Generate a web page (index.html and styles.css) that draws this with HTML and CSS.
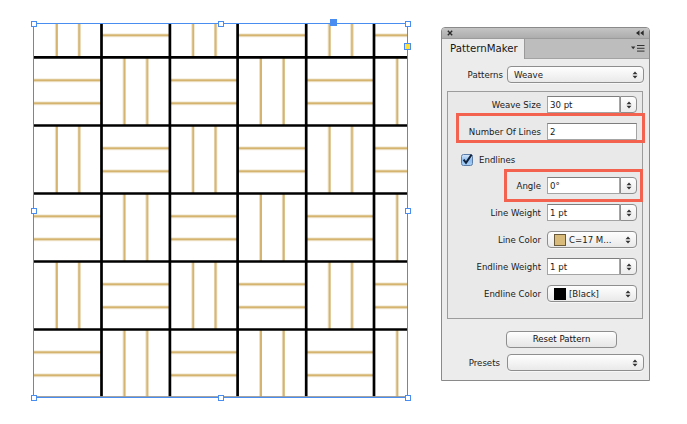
FILE: index.html
```html
<!DOCTYPE html>
<html>
<head>
<meta charset="utf-8">
<link rel="stylesheet" href="styles.css">
</head>
<body>
<div class="stage">
  <div class="artboard">
    <svg class="weave" viewBox="0 0 376 376" width="376" height="376">
      <defs>
        <pattern id="wv" patternUnits="userSpaceOnUse" x="0" y="-33.7" width="136.4" height="136">
          <g stroke="#d4b46f" stroke-width="2.4">
            <line x1="23.7" y1="0" x2="23.7" y2="68"/>
            <line x1="46.2" y1="0" x2="46.2" y2="68"/>
            <line x1="68.2" y1="23" x2="136.4" y2="23"/>
            <line x1="68.2" y1="46" x2="136.4" y2="46"/>
            <line x1="0" y1="91" x2="68.2" y2="91"/>
            <line x1="0" y1="114" x2="68.2" y2="114"/>
            <line x1="91.4" y1="68" x2="91.4" y2="136"/>
            <line x1="114.2" y1="68" x2="114.2" y2="136"/>
          </g>
        </pattern>
      </defs>
      <rect x="0.5" y="0.5" width="374" height="374" fill="url(#wv)"/>
      <g stroke="#000" stroke-width="2.7">
        <line x1="68.5" y1="0.5" x2="68.5" y2="374.5"/>
        <line x1="136.9" y1="0.5" x2="136.9" y2="374.5"/>
        <line x1="204.6" y1="0.5" x2="204.6" y2="374.5"/>
        <line x1="273.2" y1="0.5" x2="273.2" y2="374.5"/>
        <line x1="341" y1="0.5" x2="341" y2="374.5"/>
        <line x1="0.5" y1="34.3" x2="374.5" y2="34.3"/>
        <line x1="0.5" y1="102.5" x2="374.5" y2="102.5"/>
        <line x1="0.5" y1="170.5" x2="374.5" y2="170.5"/>
        <line x1="0.5" y1="238.5" x2="374.5" y2="238.5"/>
        <line x1="0.5" y1="306.5" x2="374.5" y2="306.5"/>
      </g>
      <line x1="0.5" y1="373.6" x2="374.5" y2="373.6" stroke="#9a9a9a" stroke-width="1"/>
      <rect x="0.5" y="0.5" width="374" height="374" fill="none" stroke="#4a8df0" stroke-width="1"/>
    </svg>
    <span class="handle h-tl"></span>
    <span class="handle h-tc"></span>
    <span class="handle h-tr"></span>
    <span class="handle h-ml"></span>
    <span class="handle h-mr"></span>
    <span class="handle h-bl"></span>
    <span class="handle h-bc"></span>
    <span class="handle h-br"></span>
    <span class="refpoint"></span>
    <span class="framemark"></span>
  </div>

  <div class="panel">
    <div class="titlebar">
      <svg class="ico" width="6" height="6" viewBox="0 0 6 6"><path d="M0.8 0.8 L5.2 5.2 M5.2 0.8 L0.8 5.2" stroke="#2b2b2b" stroke-width="1.4"/></svg>
      <svg class="ico" width="8" height="6" viewBox="0 0 8 6"><path d="M0 3 L3.5 0.2 L3.5 5.8 Z M4.2 3 L7.7 0.2 L7.7 5.8 Z" fill="#2b2b2b"/></svg>
    </div>
    <div class="tabbar">
      <div class="tab">PatternMaker</div>
      <svg class="menu-ico" width="14" height="7" viewBox="0 0 14 7"><path d="M0 1.5 L4.4 1.5 L2.2 4.3 Z" fill="#333"/><path d="M6 0.5 H13.5 M6 3.3 H13.5 M6 6.1 H13.5" stroke="#333" stroke-width="1"/></svg>
    </div>
    <div class="panel-body">
      <div class="row row-top">
        <span class="lbl lbl-outer">Patterns</span>
        <div class="select select-wide"><span class="sel-text">Weave</span><svg class="updown" width="6" height="8" viewBox="0 0 6 8"><path d="M3 0.5 L5.5 3.2 L0.5 3.2 Z M3 7.5 L5.5 4.8 L0.5 4.8 Z" fill="#333"/></svg></div>
      </div>

      <div class="group">
        <div class="row">
          <span class="lbl">Weave Size</span>
          <div class="field"><span class="field-text">30 pt</span><span class="stepper"><svg width="6" height="8" viewBox="0 0 6 8"><path d="M3 0.5 L5.5 3.2 L0.5 3.2 Z M3 7.5 L5.5 4.8 L0.5 4.8 Z" fill="#333"/></svg></span></div>
        </div>
        <div class="row">
          <span class="lbl">Number Of Lines</span>
          <div class="field"><span class="field-text field-full">2</span></div>
        </div>
        <div class="row row-check">
          <span class="checkbox"><svg width="12" height="12" viewBox="0 0 12 12"><defs><linearGradient id="cb" x1="0" y1="0" x2="0" y2="1"><stop offset="0" stop-color="#d9e9fb"/><stop offset="0.5" stop-color="#8dbdf0"/><stop offset="1" stop-color="#a9d0f7"/></linearGradient></defs><rect x="0.5" y="0.5" width="11" height="11" rx="2" fill="url(#cb)" stroke="#5a7ca6"/><path d="M2.6 5.6 L5 8.8 L10.6 0.6" fill="none" stroke="#13233b" stroke-width="2"/></svg></span>
          <span class="check-lbl">Endlines</span>
        </div>
        <div class="row">
          <span class="lbl">Angle</span>
          <div class="field"><span class="field-text">0°</span><span class="stepper"><svg width="6" height="8" viewBox="0 0 6 8"><path d="M3 0.5 L5.5 3.2 L0.5 3.2 Z M3 7.5 L5.5 4.8 L0.5 4.8 Z" fill="#333"/></svg></span></div>
        </div>
        <div class="row">
          <span class="lbl">Line Weight</span>
          <div class="field"><span class="field-text">1 pt</span><span class="stepper"><svg width="6" height="8" viewBox="0 0 6 8"><path d="M3 0.5 L5.5 3.2 L0.5 3.2 Z M3 7.5 L5.5 4.8 L0.5 4.8 Z" fill="#333"/></svg></span></div>
        </div>
        <div class="row">
          <span class="lbl">Line Color</span>
          <div class="select select-ctl"><span class="swatch swatch-tan"></span><span class="sel-text">C=17 M...</span><svg class="updown" width="6" height="8" viewBox="0 0 6 8"><path d="M3 0.5 L5.5 3.2 L0.5 3.2 Z M3 7.5 L5.5 4.8 L0.5 4.8 Z" fill="#333"/></svg></div>
        </div>
        <div class="row">
          <span class="lbl">Endline Weight</span>
          <div class="field"><span class="field-text">1 pt</span><span class="stepper"><svg width="6" height="8" viewBox="0 0 6 8"><path d="M3 0.5 L5.5 3.2 L0.5 3.2 Z M3 7.5 L5.5 4.8 L0.5 4.8 Z" fill="#333"/></svg></span></div>
        </div>
        <div class="row">
          <span class="lbl">Endline Color</span>
          <div class="select select-ctl"><span class="swatch swatch-black"></span><span class="sel-text">[Black]</span><svg class="updown" width="6" height="8" viewBox="0 0 6 8"><path d="M3 0.5 L5.5 3.2 L0.5 3.2 Z M3 7.5 L5.5 4.8 L0.5 4.8 Z" fill="#333"/></svg></div>
        </div>
      </div>

      <div class="btn-row"><div class="button">Reset Pattern</div></div>

      <div class="row row-presets">
        <span class="lbl lbl-outer lbl-presets">Presets</span>
        <div class="select select-wide"><span class="sel-text"></span><svg class="updown" width="6" height="8" viewBox="0 0 6 8"><path d="M3 0.5 L5.5 3.2 L0.5 3.2 Z M3 7.5 L5.5 4.8 L0.5 4.8 Z" fill="#333"/></svg></div>
      </div>
    </div>
    <span class="mark mark-lines"></span>
    <span class="mark mark-angle"></span>
  </div>
</div>
</body>
</html>
```

FILE: styles.css
```css
* { box-sizing: border-box; }
html, body { margin: 0; padding: 0; background: #ffffff; }
body { width: 687px; height: 424px; overflow: hidden; font-family: "DejaVu Sans", "Liberation Sans", sans-serif; }

.stage {
  display: flex;
  align-items: flex-start;
  padding: 23px 0 0 33px;
  gap: 33px;
}

/* ---------- artboard ---------- */
.artboard {
  position: relative;
  width: 375px;
  height: 375px;
  flex: none;
}
.weave { display: block; }

.handle {
  position: absolute;
  width: 6px;
  height: 6px;
  background: #ffffff;
  border: 1px solid #4a8df0;
}
.h-tl { left: -2px; top: -2px; }
.h-tc { left: 185px; top: -2px; }
.h-tr { left: 372px; top: -2px; }
.h-ml { left: -2px; top: 185px; }
.h-mr { left: 372px; top: 185px; }
.h-bl { left: -2px; top: 372px; }
.h-bc { left: 185px; top: 372px; }
.h-br { left: 372px; top: 372px; }

.refpoint {
  position: absolute;
  left: 297px;
  top: -4px;
  width: 7px;
  height: 7px;
  background: #4a8df0;
}
.framemark {
  position: absolute;
  left: 371px;
  top: 20px;
  width: 7px;
  height: 7px;
  background: #ffe03a;
  border: 1px solid #4a8df0;
}

/* ---------- panel ---------- */
.panel {
  position: relative;
  flex: none;
  margin-top: 4px;
  width: 209px;
  height: 354px;
  border: 1px solid #8a8a8a;
  border-radius: 4px 4px 0 0;
  background: #ececec;
  display: flex;
  flex-direction: column;
  font-size: 8.6px;
  color: #1a1a1a;
  overflow: hidden;
}
.titlebar {
  height: 11px;
  flex: none;
  background: linear-gradient(#c4c4c4, #adadad);
  border-bottom: 1px solid #9b9b9b;
  display: flex;
  align-items: center;
  justify-content: space-between;
  padding: 0 5px 0 5px;
}
.ico { display: block; }
.tabbar {
  height: 20px;
  flex: none;
  background: #bdbdbd;
  border-bottom: 1px solid #a3a3a3;
  display: flex;
  align-items: stretch;
  justify-content: space-between;
}
.tab {
  width: 83px;
  margin-bottom: -1px;
  background: #ececec;
  border-right: 1px solid #9a9a9a;
  font-size: 10.2px;
  line-height: 20px;
  padding-left: 8px;
  color: #161616;
}
.menu-ico { align-self: center; margin-right: 4px; display: block; }

.panel-body {
  flex: 1;
  padding: 7px 0 0 5px;
  display: flex;
  flex-direction: column;
}

.row {
  display: flex;
  align-items: center;
  height: 17px;
  flex: none;
}
.lbl {
  width: 99px;
  text-align: right;
  padding-right: 6px;
  flex: none;
  white-space: nowrap;
}
.lbl-outer { width: 60px; padding-right: 4px; }
.lbl-presets { padding-right: 7px; }

.select {
  height: 17px;
  border: 1px solid #8e8e8e;
  border-radius: 4px;
  background: linear-gradient(#fefefe, #f4f4f4 50%, #e9e9e9);
  display: flex;
  align-items: center;
  padding: 0 5px 0 6px;
  box-shadow: 0 1px 0 rgba(255,255,255,0.6);
}
.select-wide { width: 137px; }
.select-ctl { width: 90px; padding-left: 6px; }
.sel-text { flex: 1; white-space: nowrap; color: #1a1a1a; }
.updown { display: block; flex: none; }
.swatch {
  width: 12px;
  height: 12px;
  flex: none;
  margin-right: 3px;
  border: 1px solid #6b5a3a;
}
.swatch-tan { background: #d8bb7b; }
.swatch-black { background: #000000; border-color: #000; }

.field {
  width: 90px;
  height: 17px;
  display: flex;
}
.field-text {
  flex: 1;
  background: #ffffff;
  border: 1px solid #a4a4a4;
  border-top-color: #7d7d7d;
  padding-left: 2px;
  display: flex;
  align-items: center;
  white-space: nowrap;
}
.stepper {
  width: 17px;
  flex: none;
  border: 1px solid #8e8e8e;
  border-radius: 0 4px 4px 0;
  background: linear-gradient(#fefefe, #ececec);
  display: flex;
  align-items: center;
  justify-content: center;
}
.stepper svg { display: block; }

.group {
  margin-top: 8px;
  width: 196px;
  height: 228px;
  border: 1px solid #9c9c9c;
  background: #e9e9e9;
  padding-top: 4px;
  display: flex;
  flex-direction: column;
  gap: 10px;
}
.row-check { padding-left: 13px; }
.checkbox { width: 12px; height: 12px; margin-right: 6px; margin-top: 3px; }
.checkbox svg { display: block; }
.check-lbl { margin-top: 3px; }

.btn-row {
  display: flex;
  padding-left: 59px;
  margin-top: 12px;
}
.button {
  width: 111px;
  height: 17px;
  border: 1px solid #8e8e8e;
  border-radius: 4px;
  background: linear-gradient(#ffffff, #f1f1f1 50%, #e6e6e6);
  text-align: center;
  line-height: 15px;
  font-weight: 500;
  color: #111111;
}
.row-presets { margin-top: 6px; }

.mark {
  position: absolute;
  border: 3px solid #f2624e;
}
.mark-lines { left: 14px; top: 85px; width: 189px; height: 30px; }
.mark-angle { left: 62px; top: 141px; width: 139px; height: 33px; }
```
